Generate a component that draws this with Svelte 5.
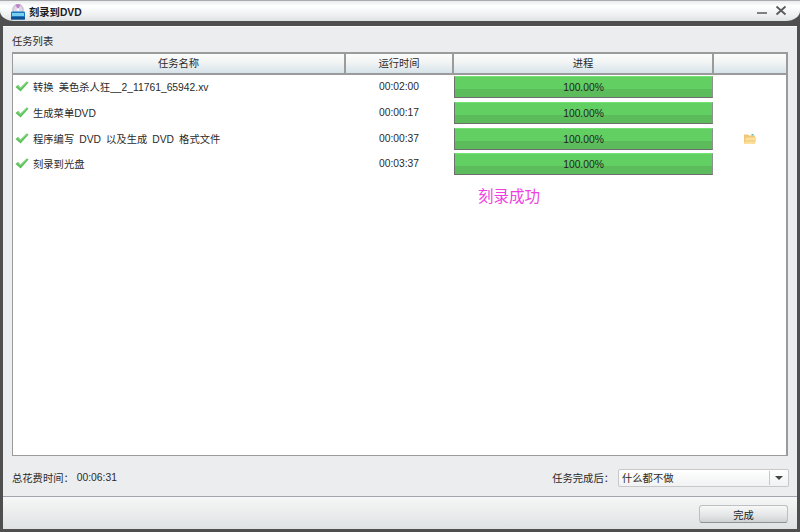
<script>
  const tasks = [
    { name: '转换 美色杀人狂__2_11761_65942.xv', time: '00:02:00' },
    { name: '生成菜单DVD', time: '00:00:17' },
    { name: '程序编写 DVD 以及生成 DVD 格式文件', time: '00:00:37', folder: true },
    { name: '刻录到光盘', time: '00:03:37' }
  ];
</script>

<div class="window">
  <header class="titlebar">
    <svg class="logo" width="16" height="16" viewBox="0 0 16 16">
      <circle cx="8" cy="5.5" r="5.2" fill="#dcd8ea" stroke="#94919f" stroke-width=".6" />
      <path d="M8 5.5 L5.5 1 A5 5 0 0 1 10.5 1 Z" fill="#c67fca" />
      <circle cx="8" cy="5.5" r="1.2" fill="#fff" />
      <rect x="1" y="7.5" width="14" height="8" rx="1" fill="#1b78bf" />
      <rect x="2" y="9" width="12" height="3" fill="#79cff2" />
      <rect x="1" y="13" width="14" height="2.5" fill="#10508f" />
    </svg>
    <span class="title">刻录到DVD</span>
    <svg class="winbtn" width="14" height="12" viewBox="0 0 14 12"><path d="M1 8h10" stroke="#5a5a5a" stroke-width="1.5" /></svg>
    <svg class="winbtn close" width="12" height="12" viewBox="0 0 12 12"><path d="M1.5 1.5l9 8M10.5 1.5l-9 8" stroke="#5a5a5a" stroke-width="1.8" /></svg>
  </header>

  <main class="content">
    <div class="caption">任务列表</div>
    <section class="table">
      <div class="thead">
        <div>任务名称</div>
        <div>运行时间</div>
        <div>进程</div>
        <div></div>
      </div>
      {#each tasks as task}
        <div class="row">
          <div class="name">
            <svg width="14" height="11" viewBox="0 0 14 11">
              <path d="M.5 6 L3 4 L5.5 6.6 L11.8 .4 L13.6 1.4 L5.6 10.6 Z" fill="#5cc05a" />
              <path d="M3 4 L5.5 6.6 L11.8 .4 L12.6 .9 L5.5 8 L2 4.8 Z" fill="#86d880" />
            </svg>
            <span>{task.name}</span>
          </div>
          <div class="time">{task.time}</div>
          <div class="bar"><span>100.00%</span></div>
          <div class="extra">
            {#if task.folder}
              <svg width="14" height="12" viewBox="0 0 14 12">
                <path d="M1 1.5h4l1 1h6v8.5H1z" fill="#f0c878" />
                <path d="M3 4.5h10.5l-1.5 6.5H1z" fill="#fcdf9c" />
                <rect x="1.5" y="7.5" width="11" height="1" fill="#f0c678" />
                <rect x="8.5" y="1" width="2" height="1.5" fill="#58b8c4" />
              </svg>
            {/if}
          </div>
        </div>
      {/each}
      <div class="success">刻录成功</div>
    </section>
    <div class="summary">
      <span class="total">总花费时间：</span>
      <span>00:06:31</span>
      <span class="after">任务完成后：</span>
      <div class="select">
        <span class="value">什么都不做</span>
        <span class="arrow"></span>
      </div>
    </div>
  </main>

  <footer class="footer">
    <button>完成</button>
  </footer>
</div>

<style>
  :global(body) {
    background: #4a4a4a;
  }

  .window {
    width: 800px;
    height: 532px;
    display: flex;
    flex-direction: column;
    box-sizing: border-box;
    background: #4f4f4f;
    font-family: "Liberation Sans", "Noto Sans CJK SC", sans-serif;
    font-size: 10.3px;
    color: #2a2a2a;
    overflow: hidden;
  }

  .titlebar {
    height: 21px;
    flex: none;
    box-sizing: border-box;
    display: flex;
    align-items: center;
    padding: 0 13px 0 10px;
    background: linear-gradient(#e9ebed, #ffffff 25%, #eef0f1 70%, #dfe2e4);
    border-top: 1px solid #a9abaf;
    border-radius: 0 0 14px 14px / 0 0 10px 10px;
  }

  .logo {
    margin-top: 2px;
  }

  .title {
    margin-left: 3px;
    flex: 1;
    font-weight: bold;
    color: #1c1c1c;
  }

  .winbtn {
    margin-left: 5px;
  }

  .content {
    flex: 1;
    min-height: 0;
    margin: 5px 3px 0;
    padding: 0 9px;
    background: #ecedef;
    border-top: 1px solid #fafafa;
    display: flex;
    flex-direction: column;
  }

  .caption {
    height: 25px;
    line-height: 29px;
    flex: none;
  }

  .table {
    position: relative;
    height: 404px;
    flex: none;
    box-sizing: border-box;
    background: #fff;
    border: 1px solid #9b9b9b;
    border-width: 2px 2px 1px 1px;
  }

  .thead {
    display: grid;
    grid-template-columns: 333px 108px 260px 1fr;
    height: 19px;
    border-bottom: 2px solid #9b9b9b;
    box-sizing: content-box;
  }

  .thead div {
    background: linear-gradient(#fbfcfc, #f3f5f5 40%, #d6e3ea);
    border-right: 2px solid #9b9b9b;
    text-align: center;
    line-height: 19px;
  }

  .thead div:last-child {
    border-right: 0;
  }

  .row {
    display: grid;
    grid-template-columns: 333px 108px 260px 1fr;
    height: 25.7px;
    align-items: center;
  }

  .name {
    display: flex;
    align-items: center;
    gap: 4px;
    padding: 0 0 2px 2px;
    white-space: nowrap;
    word-spacing: 2.2px;
  }

  .time {
    padding: 0 2px 2px 0;
    text-align: center;
  }

  .bar {
    height: 22px;
    margin: 0 1px 1px 0;
    box-sizing: border-box;
    text-align: center;
    line-height: 21px;
    color: #222;
    background: linear-gradient(#62cf62 0, #62cf62 58%, #5cbc5c 58%);
    border: 1px solid #6e6e6e;
    border-color: #72e272 #8f8f8f #6e6e6e #6e6e6e;
  }

  .extra {
    display: flex;
    justify-content: center;
  }

  .success {
    position: absolute;
    left: 465px;
    top: 130px;
    font-size: 15.5px;
    color: #f03fe0;
  }

  .summary {
    flex: 1;
    display: flex;
    align-items: center;
    gap: 3px;
    padding-top: 3px;
  }

  .after {
    margin-left: auto;
    margin-right: 1px;
  }

  .select {
    width: 171px;
    height: 18px;
    margin-right: -1px;
    display: flex;
    align-items: center;
    box-sizing: border-box;
    border: 1px solid #c8c8c8;
    border-radius: 2px;
    background: linear-gradient(#ffffff, #f1f2f3);
  }

  .value {
    flex: 1;
    padding-left: 3px;
  }

  .arrow {
    width: 18px;
    height: 14px;
    border-left: 1px solid #c8c8c8;
    position: relative;
  }

  .arrow::after {
    content: "";
    position: absolute;
    left: 5px;
    top: 5px;
    border: 4px solid transparent;
    border-top: 4px solid #444;
    border-bottom: 0;
  }

  .footer {
    height: 33px;
    flex: none;
    margin: 0 3px 3px;
    box-sizing: border-box;
    display: flex;
    align-items: center;
    justify-content: flex-end;
    padding: 2px 9px 0 0;
    border-top: 1px solid #a2a5ae;
    background: linear-gradient(#f6f7f7, #dfe2e3);
  }

  button {
    width: 89px;
    height: 18px;
    padding: 0;
    font: inherit;
    color: #222;
    border: 1px solid #bdbfc1;
    border-bottom-color: #8f9193;
    border-radius: 3px;
    background: linear-gradient(#f8f8f8, #e3e5e6 60%, #cfd2d3);
  }
</style>
